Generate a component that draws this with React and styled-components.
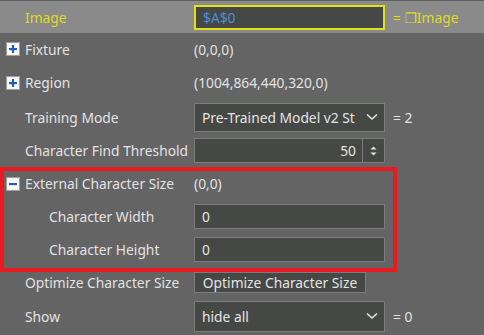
import React from "react";
import styled, { createGlobalStyle } from "styled-components";

const Global = createGlobalStyle`
  html, body { margin: 0; padding: 0; background: #646464; }
  body { font-family: "Noto Sans", "DejaVu Sans", sans-serif; }
`;

const Panel = styled.div`
  position: relative;
  width: 484px;
  height: 335px;
  background: #646464;
  overflow: hidden;
  color: #e4e4e4;
  font-size: 13.8px;
`;

const Row = styled.div`
  display: grid;
  grid-template-columns: 194px 191px 1fr;
  align-items: center;
  height: ${(p) => p.$h || 33}px;
  background: ${(p) => (p.$header ? "#8a8a8a" : "transparent")};
  border-top: ${(p) => (p.$header ? "1px solid #5e5e5e" : "none")};
  box-sizing: border-box;
`;

const Label = styled.div`
  display: flex;
  align-items: center;
  gap: 5px;
  padding-left: ${(p) => p.$indent}px;
  color: ${(p) => (p.$yellow ? "#dedb22" : "#e2e2e2")};
  white-space: nowrap;
`;

const Value = styled.div`
  color: #e2e2e2;
  white-space: nowrap;
`;

const Extra = styled.div`
  padding-left: 8px;
  color: ${(p) => (p.$yellow ? "#dedb22" : "#e2e2e2")};
  white-space: nowrap;
`;

const Field = styled.div`
  box-sizing: border-box;
  height: ${(p) => p.$h || 25}px;
  width: ${(p) => p.$w || 191}px;
  background: #464846;
  border: ${(p) => (p.$yellow ? "2px solid #e2df1c" : "1px solid #7c7c7c")};
  display: flex;
  align-items: center;
  padding-left: 7px;
  color: ${(p) => (p.$blue ? "#4a8fd8" : "#e4e4e4")};
  justify-content: space-between;
  white-space: nowrap;
  overflow: hidden;
`;

const SpinField = styled(Field)`
  padding-left: 0;
  justify-content: flex-end;
`;

const SpinValue = styled.span`
  padding-right: 6px;
`;

const Spinner = styled.div`
  width: 21px;
  height: 100%;
  border-left: 1px solid #7c7c7c;
  display: flex;
  align-items: center;
  justify-content: center;
`;

const Chevron = styled.div`
  width: 24px;
  display: flex;
  justify-content: center;
  flex-shrink: 0;
`;

const SelectText = styled.span`
  overflow: hidden;
`;

const Button = styled.div`
  box-sizing: border-box;
  height: 21px;
  width: 172px;
  background: #464846;
  border: 1px solid #7c7c7c;
  display: flex;
  align-items: center;
  justify-content: center;
  color: #e4e4e4;
  white-space: nowrap;
`;

const Highlight = styled.div`
  position: absolute;
  left: 0;
  top: 167px;
  width: 397px;
  height: 105px;
  box-sizing: border-box;
  border: 4px solid #ea1a22;
  pointer-events: none;
`;

const Expander = ({ open }) => (
  <svg width="14" height="14" viewBox="0 0 14 14">
    <rect x="0.5" y="0.5" width="13" height="13" fill="#f2f2f2" stroke="#a0a0a0" />
    <rect x="2" y="2" width="10" height="10" fill="#ffffff" />
    <rect x="3" y="6" width="8" height="2.2" fill="#1c5fb8" />
    {!open && <rect x="5.9" y="3" width="2.2" height="8" fill="#1c5fb8" />}
  </svg>
);

const ChevronDown = () => (
  <svg width="12" height="8" viewBox="0 0 12 8">
    <path d="M1 1.5 L6 6 L11 1.5" fill="none" stroke="#e4e4e4" strokeWidth="1.6" />
  </svg>
);

const UpDown = () => (
  <svg width="9" height="14" viewBox="0 0 9 14">
    <path d="M1.5 5.5 L4.5 2.5 L7.5 5.5 Z" fill="#e4e4e4" />
    <path d="M1.5 8.5 L4.5 11.5 L7.5 8.5 Z" fill="#e4e4e4" />
  </svg>
);

export default function App() {
  return (
    <>
      <Global />
      <Panel>
        <Row $header $h={33}>
          <Label $indent={25} $yellow>Image</Label>
          <Field $yellow $blue>$A$0</Field>
          <Extra $yellow>= ❐Image</Extra>
        </Row>
        <Row $h={32}>
          <Label $indent={6}><Expander />Fixture</Label>
          <Value>(0,0,0)</Value>
        </Row>
        <Row $h={35}>
          <Label $indent={6}><Expander />Region</Label>
          <Value>(1004,864,440,320,0)</Value>
        </Row>
        <Row $h={34}>
          <Label $indent={25}>Training Mode</Label>
          <Field $h={29}>
            <SelectText>Pre-Trained Model v2 St</SelectText>
            <Chevron><ChevronDown /></Chevron>
          </Field>
          <Extra>= 2</Extra>
        </Row>
        <Row $h={33}>
          <Label $indent={25}>Character Find Threshold</Label>
          <SpinField>
            <SpinValue>50</SpinValue>
            <Spinner><UpDown /></Spinner>
          </SpinField>
        </Row>
        <Row $h={33}>
          <Label $indent={6}><Expander open />External Character Size</Label>
          <Value>(0,0)</Value>
        </Row>
        <Row $h={33}>
          <Label $indent={49}>Character Width</Label>
          <Field>0</Field>
        </Row>
        <Row $h={32}>
          <Label $indent={49}>Character Height</Label>
          <Field>0</Field>
        </Row>
        <Row $h={34}>
          <Label $indent={25}>Optimize Character Size</Label>
          <Button>Optimize Character Size</Button>
        </Row>
        <Row $h={34}>
          <Label $indent={25}>Show</Label>
          <Field $h={31}>
            <SelectText>hide all</SelectText>
            <Chevron><ChevronDown /></Chevron>
          </Field>
          <Extra>= 0</Extra>
        </Row>
        <Highlight />
      </Panel>
    </>
  );
}
